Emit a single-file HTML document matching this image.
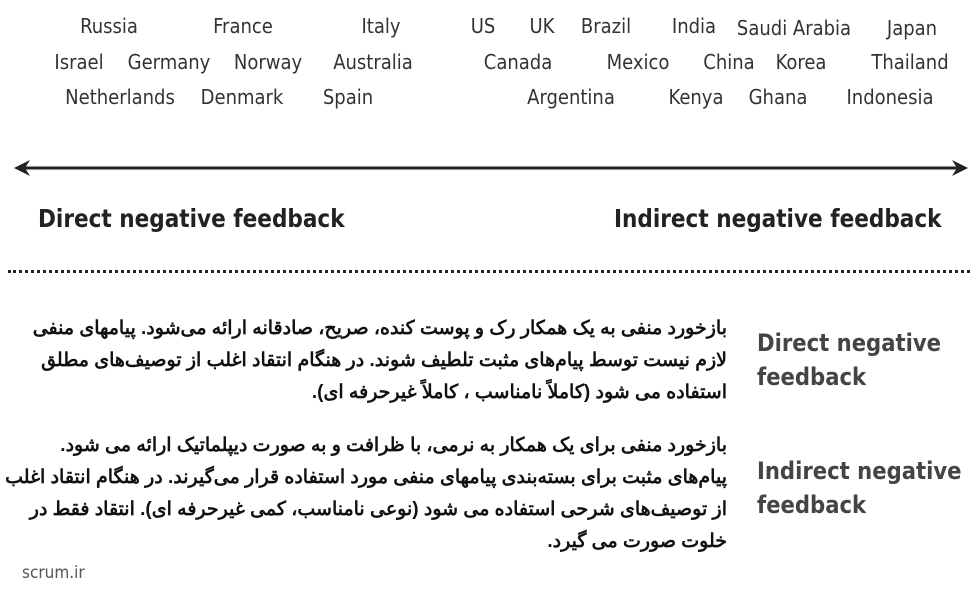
<!DOCTYPE html>
<html><head><meta charset="utf-8"><style>
body{margin:0;width:980px;height:615px;background:#fff;position:relative;overflow:hidden;font-family:"Liberation Sans Narrow","DejaVu Sans Condensed","Liberation Sans",sans-serif}
.c{position:absolute;font-size:20px;color:#333;transform:translate(-50%,-50%);white-space:nowrap}
.h{position:absolute;font-size:25px;font-weight:bold;color:#222;white-space:nowrap;transform-origin:left top;transform:scaleX(0.96)}
.fa{position:absolute;direction:rtl;text-align:right;font-family:"Liberation Sans","Noto Sans CJK SC",sans-serif;font-weight:bold;font-size:19px;line-height:32px;color:#111;right:253px;white-space:nowrap}
.l{position:absolute;font-size:24px;color:#444;line-height:34px;font-weight:bold;left:757px;transform-origin:left top;transform:scaleX(0.98)}
</style></head><body>
<div class="c" style="left:109px;top:26px">Russia</div>
<div class="c" style="left:243px;top:26px">France</div>
<div class="c" style="left:381px;top:26px">Italy</div>
<div class="c" style="left:483px;top:26px">US</div>
<div class="c" style="left:542px;top:26px">UK</div>
<div class="c" style="left:606px;top:26px">Brazil</div>
<div class="c" style="left:694px;top:26px">India</div>
<div class="c" style="left:794px;top:28px">Saudi Arabia</div>
<div class="c" style="left:912px;top:28px">Japan</div>
<div class="c" style="left:79px;top:62px">Israel</div>
<div class="c" style="left:169px;top:62px">Germany</div>
<div class="c" style="left:268px;top:62px">Norway</div>
<div class="c" style="left:373px;top:62px">Australia</div>
<div class="c" style="left:518px;top:62px">Canada</div>
<div class="c" style="left:638px;top:62px">Mexico</div>
<div class="c" style="left:729px;top:62px">China</div>
<div class="c" style="left:801px;top:62px">Korea</div>
<div class="c" style="left:910px;top:62px">Thailand</div>
<div class="c" style="left:120px;top:97px">Netherlands</div>
<div class="c" style="left:242px;top:97px">Denmark</div>
<div class="c" style="left:348px;top:97px">Spain</div>
<div class="c" style="left:571px;top:97px">Argentina</div>
<div class="c" style="left:696px;top:97px">Kenya</div>
<div class="c" style="left:778px;top:97px">Ghana</div>
<div class="c" style="left:890px;top:97px">Indonesia</div>
<svg style="position:absolute;left:0;top:155px" width="980" height="26">
<line x1="18" y1="13" x2="962" y2="13" stroke="#222" stroke-width="3"/>
<path d="M14 13 L30 5 L25 13 L30 21Z" fill="#222"/>
<path d="M968 13 L952 5 L957 13 L952 21Z" fill="#222"/>
</svg>
<div class="h" style="left:38px;top:204px">Direct negative feedback</div>
<div class="h" style="left:614px;top:204px">Indirect negative feedback</div>
<div style="position:absolute;left:8px;top:270px;width:962px;border-top:3px dotted #222"></div>
<div class="fa" style="top:313px">بازخورد منفی به یک همکار رک و پوست کنده، صریح، صادقانه ارائه می‌شود. پیامهای منفی<br>لازم نیست توسط پیام‌های مثبت تلطیف شوند. در هنگام انتقاد اغلب از توصیف‌های مطلق<br>استفاده می شود (کاملاً نامناسب ، کاملاً غیرحرفه ای).</div>
<div class="fa" style="top:430px">بازخورد منفی برای یک همکار به نرمی، با ظرافت و به صورت دیپلماتیک ارائه می شود.<br>پیام‌های مثبت برای بسته‌بندی پیامهای منفی مورد استفاده قرار می‌گیرند. در هنگام انتقاد اغلب<br>از توصیف‌های شرحی استفاده می شود (نوعی نامناسب، کمی غیرحرفه ای). انتقاد فقط در<br>خلوت صورت می گیرد.</div>
<div class="l" style="top:326px">Direct negative<br>feedback</div>
<div class="l" style="top:454px">Indirect negative<br>feedback</div>
<div style="position:absolute;left:22px;top:563px;font-size:17px;color:#555">scrum.ir</div>
</body></html>
